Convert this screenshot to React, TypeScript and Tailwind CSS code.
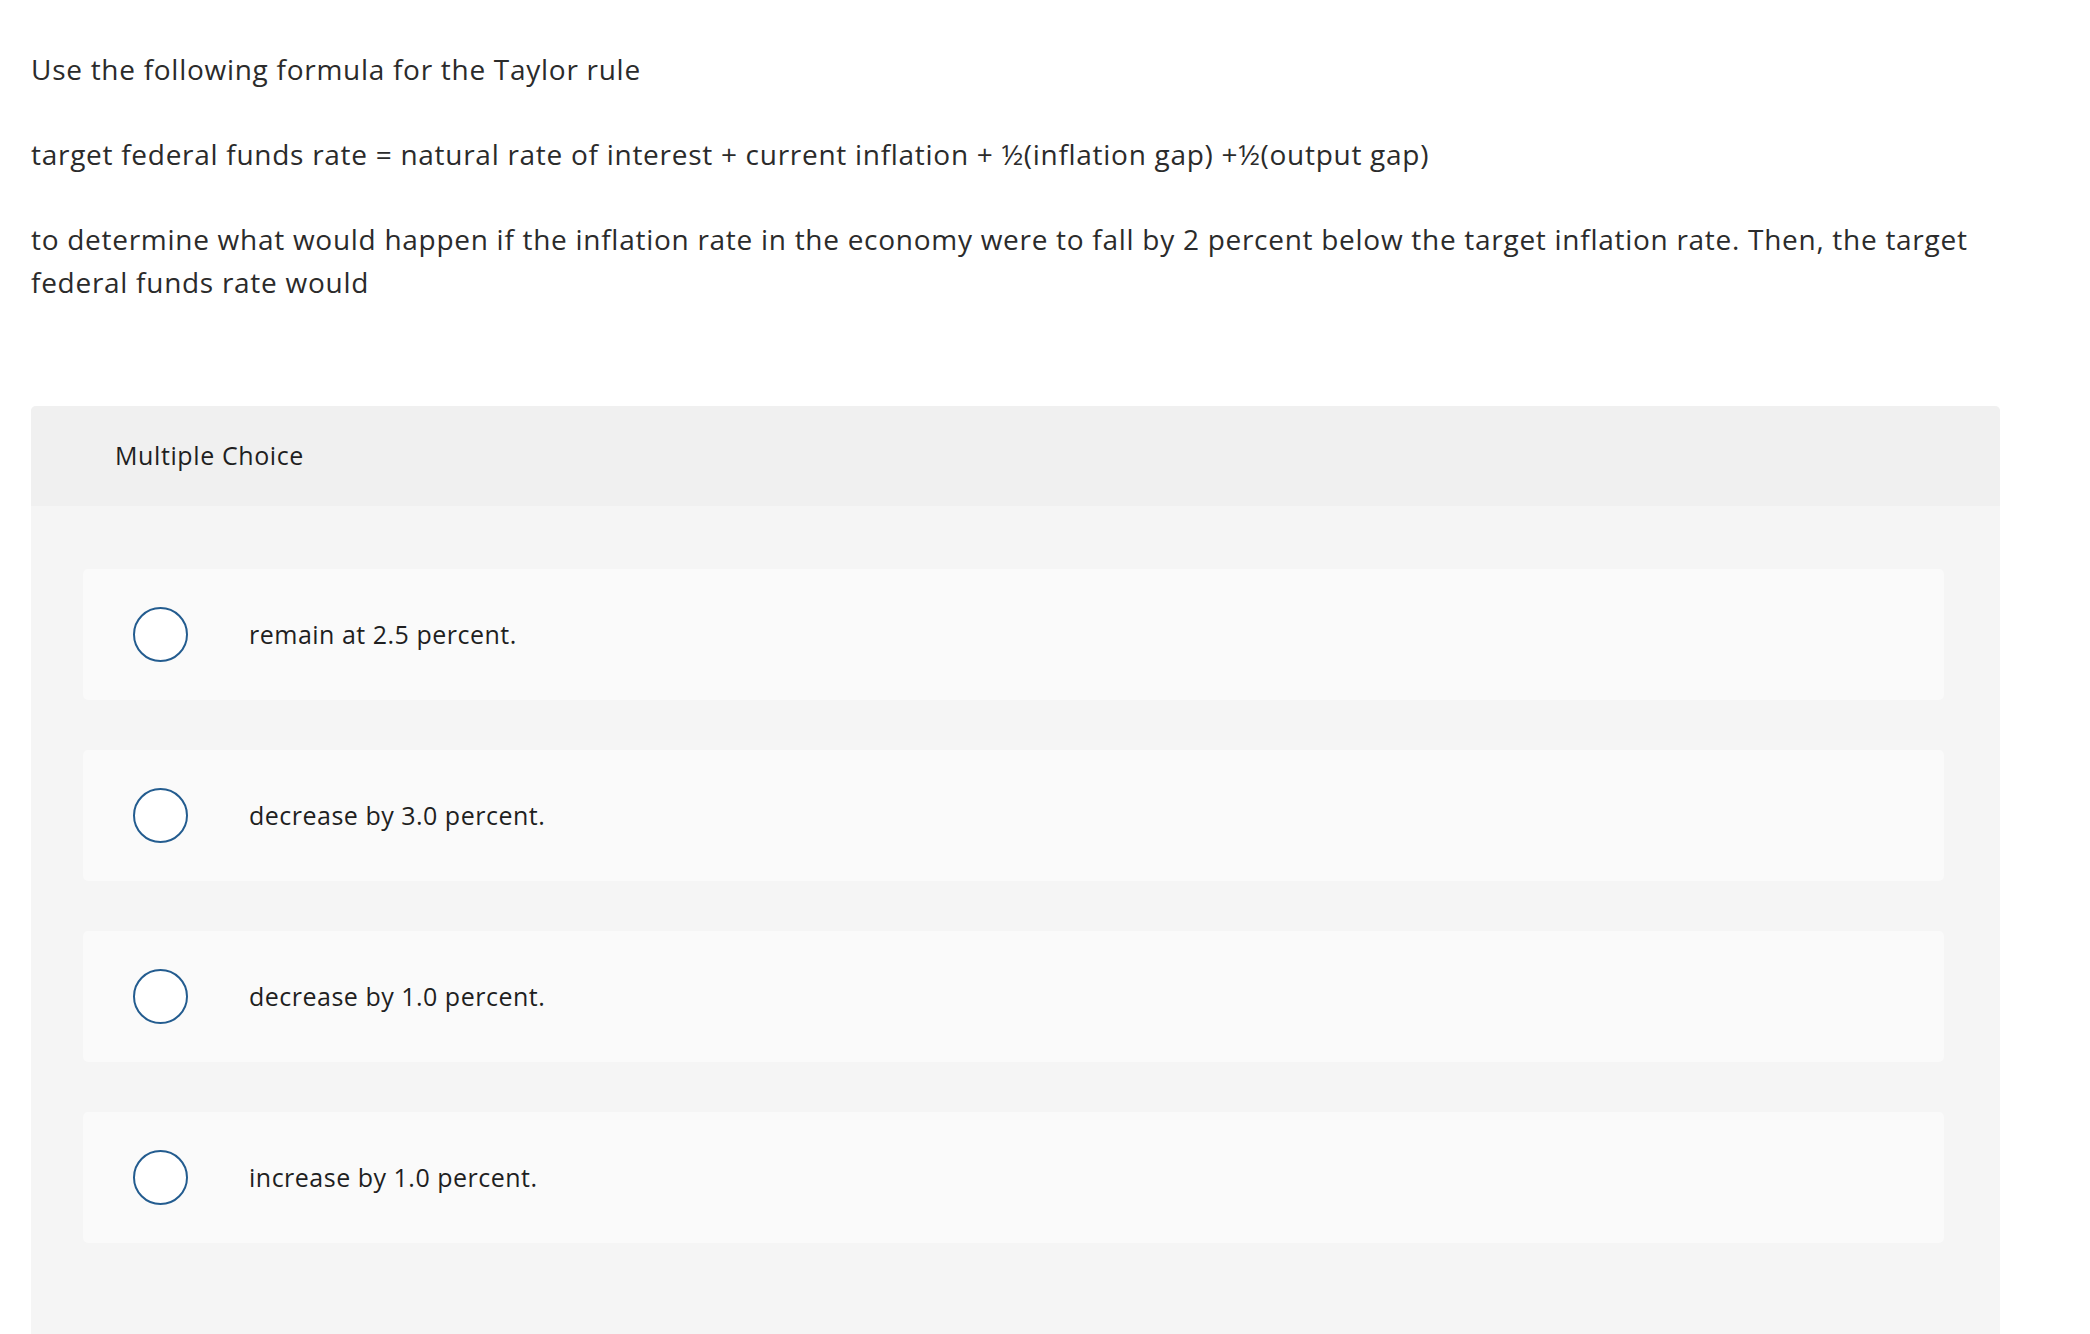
import React from "react";

const options = [
  "remain at 2.5 percent.",
  "decrease by 3.0 percent.",
  "decrease by 1.0 percent.",
  "increase by 1.0 percent.",
];

export default function App() {
  return (
    <div className="min-h-screen bg-white font-['Open_Sans','Liberation_Sans',sans-serif] text-[#2b2b2b]">
      <div className="px-[31px] pt-[48px]">
        {/* Question stem */}
        <div className="w-[1969px] text-[28px] leading-[43px] tracking-[0.72px]">
          <p>Use the following formula for the Taylor rule</p>
          <p className="mt-[42px]">
            target federal funds rate = natural rate of interest + current inflation + ½(inflation gap) +½(output gap)
          </p>
          <p className="mt-[42px]">
            to determine what would happen if the inflation rate in the economy were to fall by 2 percent below the target inflation rate. Then, the target federal funds rate would
          </p>
        </div>

        {/* Answer panel */}
        <div className="mt-[102px] w-[1969px] overflow-hidden rounded-t-[5px] bg-[#f5f5f5] pb-[120px]">
          <div className="flex h-[100px] items-center bg-[#f0f0f0] pl-[84px] text-[25px] tracking-[0.6px] text-[#1f1f1f]">
            Multiple Choice
          </div>
          <div className="flex flex-col gap-[50px] pl-[52px] pr-[56px] pt-[63px]">
            {options.map((opt) => (
              <label
                key={opt}
                className="flex h-[131px] cursor-pointer items-center rounded-[5px] bg-[#fafafa] pl-[50px]"
              >
                <span className="h-[55px] w-[55px] shrink-0 rounded-full border-2 border-[#235c8f] bg-white" />
                <span className="ml-[61px] text-[25px] tracking-[0.5px] text-[#1f1f1f]">{opt}</span>
              </label>
            ))}
          </div>
        </div>
      </div>
    </div>
  );
}
